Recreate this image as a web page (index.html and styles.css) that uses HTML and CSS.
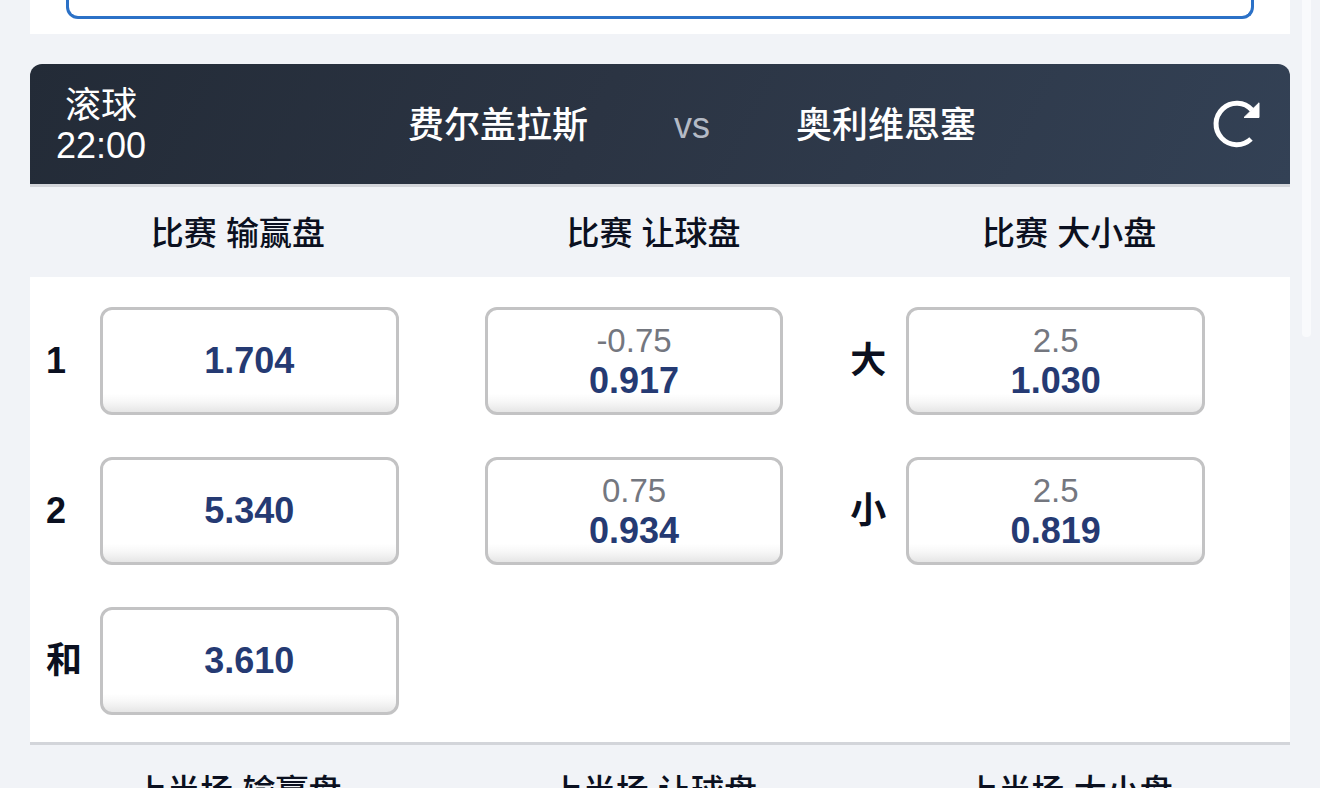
FILE: index.html
```html
<!DOCTYPE html>
<html lang="zh-CN">
<head>
<meta charset="utf-8">
<meta name="viewport" content="width=device-width, initial-scale=1">
<title>费尔盖拉斯 vs 奥利维恩塞</title>
<link rel="stylesheet" href="styles.css">
</head>
<body>
<main class="page">
  <section class="top-panel"><div class="outline-box"></div></section>
  <section class="match">
    <header class="match-bar">
      <div class="status"><span>滚球</span><span>22:00</span></div>
      <h1 class="teams"><span class="team home">费尔盖拉斯</span><span class="versus">vs</span><span class="team">奥利维恩塞</span></h1>
      <button class="refresh" type="button" aria-label="刷新">
        <svg viewBox="0 0 50 50" aria-hidden="true">
          <path d="M42 11A20.7 20.7 0 1 0 41 40" fill="none" stroke="currentColor" stroke-width="5"/>
          <path d="M49 3.8V18.5H34Z" fill="currentColor" stroke="currentColor" stroke-width="1" stroke-linejoin="round"/>
        </svg>
      </button>
    </header>
    <div class="market-heads"><h2>比赛 输赢盘</h2><h2>比赛 让球盘</h2><h2>比赛 大小盘</h2></div>
    <div class="odds-panel">
      <div class="odds-row">
        <span class="label">1</span>
        <button class="odd" type="button"><b>1.704</b></button>
        <span></span>
        <button class="odd" type="button"><span>-0.75</span><b>0.917</b></button>
        <span class="label side">大</span>
        <button class="odd" type="button"><span>2.5</span><b>1.030</b></button>
      </div>
      <div class="odds-row">
        <span class="label">2</span>
        <button class="odd" type="button"><b>5.340</b></button>
        <span></span>
        <button class="odd" type="button"><span>0.75</span><b>0.934</b></button>
        <span class="label side">小</span>
        <button class="odd" type="button"><span>2.5</span><b>0.819</b></button>
      </div>
      <div class="odds-row">
        <span class="label">和</span>
        <button class="odd" type="button"><b>3.610</b></button>
      </div>
    </div>
    <div class="market-heads"><h2>上半场 输赢盘</h2><h2>上半场 让球盘</h2><h2>上半场 大小盘</h2></div>
  </section>
</main>
<div class="scroll-thumb"></div>
</body>
</html>
```
FILE: styles.css
```css
* { box-sizing: border-box; }
body {
  margin: 0;
  height: 100vh;
  overflow: hidden;
  background: #f1f3f7;
  color: #0b1020;
  font-family: "Liberation Sans", "Noto Sans CJK SC", sans-serif;
}
.page { padding: 0 30px; }
.top-panel {
  padding: 0 36px 15px;
  margin-bottom: 30px;
  background: #fff;
}
.outline-box {
  height: 19px;
  border: 3px solid #2b71c7;
  border-top: 0;
  border-radius: 0 0 12px 12px;
}
.match-bar {
  display: grid;
  grid-template-columns: 142px 1fr 78px;
  align-items: center;
  height: 120px;
  padding-top: 4px;
  border-radius: 12px 12px 0 0;
  background: linear-gradient(115deg, #232b37, #2b3443 45%, #334155);
  color: #fff;
}
.status {
  display: flex;
  flex-direction: column;
  align-items: center;
  font-size: 36px;
  line-height: 40px;
}
.teams {
  display: grid;
  grid-template-columns: 1fr 208px 1fr;
  align-items: center;
  margin: 0;
  font-size: 36px;
  line-height: 48px;
  font-weight: 500;
}
.home { text-align: right; }
.versus {
  text-align: center;
  color: #b4bac5;
  font-weight: 400;
}
.refresh {
  justify-self: end;
  width: 50px;
  height: 50px;
  margin: 0 30px 4px 0;
  padding: 0;
  border: 0;
  background: none;
  color: #fff;
}
.refresh svg { display: block; width: 100%; height: 100%; }
.market-heads {
  display: grid;
  grid-template-columns: repeat(3, 1fr);
  align-items: center;
  height: 93px;
  padding: 4px 13px 0 0;
  border-top: 3px solid #d3d5da;
}
.market-heads h2 {
  margin: 0;
  text-align: center;
  font-size: 33px;
  line-height: 48px;
  font-weight: 500;
}
.odds-panel {
  display: grid;
  gap: 42px;
  padding: 30px 0 27px;
  background: #fff;
}
.odds-row {
  display: grid;
  grid-template-columns: 70px 1fr 86px 1fr 123px 1fr 85px;
  align-items: center;
}
.label { padding-left: 16px; font-size: 36px; line-height: 48px; font-weight: 700; }
.side { padding: 0 20px 0 0; text-align: right; }
.odd {
  display: flex;
  flex-direction: column;
  align-items: center;
  justify-content: center;
  height: 108px;
  padding: 0;
  border: 3px solid #c3c3c4;
  border-radius: 12px;
  background: linear-gradient(#fff 82%, #f7f7f7 90%, #e6e6e6);
  color: #253a73;
  font: inherit;
  font-size: 36px;
  line-height: 40px;
}
.odd span { color: #74777f; font-size: 33px; }
.scroll-thumb {
  position: absolute;
  top: 0;
  right: 9px;
  width: 9px;
  height: 337px;
  border-radius: 0 0 4px 4px;
  background: #f9fafc;
}
```
